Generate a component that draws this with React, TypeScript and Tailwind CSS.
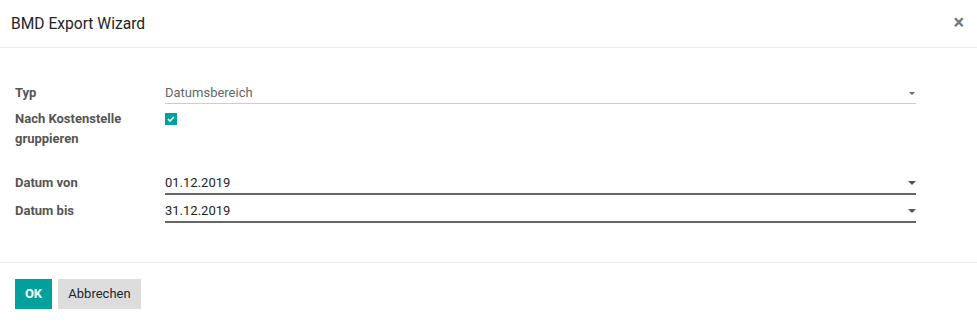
export default function App() {
  const font = { fontFamily: "Roboto, 'Noto Sans', sans-serif" };
  return (
    <div style={font} className="w-[977px] h-[330px] bg-white text-[13px] text-[#212529] overflow-hidden">
      {/* header */}
      <div className="h-[48px] flex items-center justify-between pl-[11px] pr-[13px] border-b border-[#e9ecef]">
        <h4 className="text-[15.6px] text-[#212529] leading-[20px]">BMD Export Wizard</h4>
        <button className="text-[#777] text-[20px] font-bold leading-none -mt-[4px]">×</button>
      </div>

      {/* body */}
      <div className="h-[214px] pl-[15px] pt-[36px]">
        <div className="flex">
          <div className="w-[150px] font-bold text-[#555] leading-[20px] -mt-[1px]">Typ</div>
          <div className="w-[751px] flex items-center justify-between border-b border-[#ccc] leading-[20px] text-[#666]">
            <span className="-mt-[1px]">Datumsbereich</span>
            <svg width="6" height="3" viewBox="0 0 6 3" className="mr-[1px] -mt-[1px]">
              <path d="M0 0H6L3 3Z" fill="#666" />
            </svg>
          </div>
        </div>

        <div className="flex mt-[4px]">
          <div className="w-[150px] font-bold text-[#555] leading-[20px] pt-[1px]">
            Nach Kostenstelle
            <br />
            gruppieren
          </div>
          <div className="pt-[5px]">
            <div className="w-[12px] h-[12px] bg-[#00a09d] flex items-center justify-center">
              <svg width="8" height="6" viewBox="0 0 8 6">
                <path d="M1 3L3 5L7 1" stroke="white" strokeWidth="1.6" fill="none" />
              </svg>
            </div>
          </div>
        </div>

        <div className="flex mt-[24px]">
          <div className="w-[150px] font-bold text-[#555] leading-[20px]">Datum von</div>
          <div className="w-[751px] flex items-center justify-between border-b-2 border-[#666] leading-[20px]">
            <span>01.12.2019</span>
            <svg width="8" height="4" viewBox="0 0 8 4">
              <path d="M0 0H8L4 4Z" fill="#555" />
            </svg>
          </div>
        </div>

        <div className="flex mt-[6px]">
          <div className="w-[150px] font-bold text-[#555] leading-[20px]">Datum bis</div>
          <div className="w-[751px] flex items-center justify-between border-b-2 border-[#666] leading-[20px]">
            <span>31.12.2019</span>
            <svg width="8" height="4" viewBox="0 0 8 4">
              <path d="M0 0H8L4 4Z" fill="#555" />
            </svg>
          </div>
        </div>
      </div>

      {/* footer */}
      <div className="border-t border-[#e9ecef] pt-[16px] pl-[15px] flex gap-[6px]">
        <button className="h-[30px] w-[37px] bg-[#00a09d] text-white font-bold">OK</button>
        <button className="h-[30px] w-[83px] bg-[#dddddd] text-[#212529]">Abbrechen</button>
      </div>
    </div>
  );
}
